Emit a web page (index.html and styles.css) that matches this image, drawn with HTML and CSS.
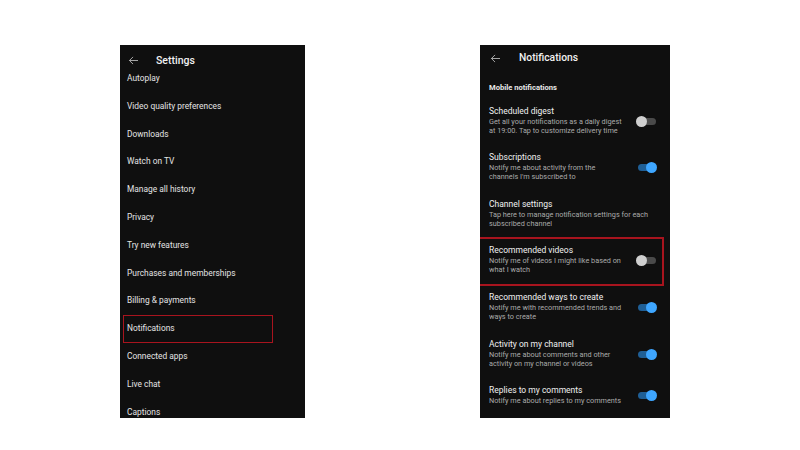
FILE: index.html
```html
<!DOCTYPE html>
<html lang="en">
<head>
<meta charset="utf-8">
<title>Settings and Notifications</title>
<link rel="stylesheet" href="styles.css">
</head>
<body>
<main class="stage">
  <section class="phone settings">
    <header class="bar">
      <svg class="back" viewBox="0 0 12 10" aria-hidden="true"><path d="M11 5H1.5M5.5 1L1.5 5l4 4" fill="none" stroke="currentColor" stroke-width="0.9"/></svg>
      <h1 class="bar-title">Settings</h1>
    </header>
    <ul class="menu">
      <li class="menu-item">Autoplay</li>
      <li class="menu-item">Video quality preferences</li>
      <li class="menu-item">Downloads</li>
      <li class="menu-item">Watch on TV</li>
      <li class="menu-item">Manage all history</li>
      <li class="menu-item">Privacy</li>
      <li class="menu-item">Try new features</li>
      <li class="menu-item">Purchases and memberships</li>
      <li class="menu-item">Billing &amp; payments</li>
      <li class="menu-item highlight">Notifications</li>
      <li class="menu-item">Connected apps</li>
      <li class="menu-item">Live chat</li>
      <li class="menu-item">Captions</li>
    </ul>
  </section>

  <section class="phone notifications">
    <header class="bar bar-n">
      <svg class="back" viewBox="0 0 12 10" aria-hidden="true"><path d="M11 5H1.5M5.5 1L1.5 5l4 4" fill="none" stroke="currentColor" stroke-width="0.9"/></svg>
      <h1 class="bar-title">Notifications</h1>
    </header>
    <h2 class="section-label">Mobile notifications</h2>
    <ul class="opts">
      <li class="opt">
        <div class="opt-text"><div class="opt-title">Scheduled digest</div><div class="opt-desc">Get all your notifications as a daily digest<br>at 19:00. Tap to customize delivery time</div></div>
        <span class="toggle"></span>
      </li>
      <li class="opt">
        <div class="opt-text"><div class="opt-title">Subscriptions</div><div class="opt-desc">Notify me about activity from the<br>channels I'm subscribed to</div></div>
        <span class="toggle on"></span>
      </li>
      <li class="opt">
        <div class="opt-text"><div class="opt-title">Channel settings</div><div class="opt-desc">Tap here to manage notification settings for each<br>subscribed channel</div></div>
      </li>
      <li class="opt highlight">
        <div class="opt-text"><div class="opt-title">Recommended videos</div><div class="opt-desc">Notify me of videos I might like based on<br>what I watch</div></div>
        <span class="toggle"></span>
      </li>
      <li class="opt">
        <div class="opt-text"><div class="opt-title">Recommended ways to create</div><div class="opt-desc">Notify me with recommended trends and<br>ways to create</div></div>
        <span class="toggle on"></span>
      </li>
      <li class="opt">
        <div class="opt-text"><div class="opt-title">Activity on my channel</div><div class="opt-desc">Notify me about comments and other<br>activity on my channel or videos</div></div>
        <span class="toggle on"></span>
      </li>
      <li class="opt">
        <div class="opt-text"><div class="opt-title">Replies to my comments</div><div class="opt-desc">Notify me about replies to my comments</div></div>
        <span class="toggle on"></span>
      </li>
    </ul>
  </section>
</main>
</body>
</html>
```

FILE: styles.css
```css
* { box-sizing: border-box; }
html, body { margin: 0; padding: 0; }
body {
  width: 800px;
  height: 450px;
  background: #ffffff;
  font-family: Roboto, "Liberation Sans", Arial, sans-serif;
  overflow: hidden;
}
.stage {
  display: flex;
  align-items: flex-start;
  padding: 45px 0 0 120px;
  gap: 175px;
}
.phone {
  background: #0f0f0f;
  height: 373px;
  overflow: hidden;
  color: #e6e6e6;
}
.settings { width: 185px; }
.notifications { width: 190px; }

.bar {
  display: flex;
  align-items: center;
  height: 20px;
  padding: 11px 0 0 8px;
}
.back {
  width: 11px;
  height: 9px;
  color: #c8c8c8;
  flex: none;
}
.bar-title {
  margin: 0 0 0 17px;
  font-size: 10.5px;
  line-height: 12px;
  font-weight: 500;
  color: #f1f1f1;
}
.menu {
  list-style: none;
  margin: 0;
  padding: 0;
}
.menu-item {
  height: 27.8px;
  line-height: 27.8px;
  padding-left: 7px;
  font-size: 8.4px;
  color: #e4e4e4;
}
.menu-item.highlight {
  margin: 0 32px 0 3px;
  padding-left: 3px;
  border: 1.5px solid #a8141e;
  line-height: 24.8px;
}

.bar-n {
  height: 26px;
  padding: 0 0 0 10px;
}
.bar-n .bar-title {
  margin-left: 18px;
  font-size: 10.3px;
}
.section-label {
  margin: 0;
  padding: 12px 0 8.5px 9px;
  font-size: 7.6px;
  line-height: 10px;
  font-weight: 700;
  color: #e8e8e8;
}
.opts {
  list-style: none;
  margin: 0;
  padding: 0;
}
.opt {
  position: relative;
  display: flex;
  align-items: flex-start;
  height: 46.67px;
  padding: 4px 13px 0 9px;
}
.opt-text { flex: 1; }
.opt-title {
  font-size: 8.5px;
  line-height: 11px;
  color: #f1f1f1;
}
.opt-desc {
  font-size: 7.3px;
  line-height: 9px;
  color: #aaaaaa;
  white-space: nowrap;
}
.toggle {
  position: relative;
  flex: none;
  width: 21px;
  height: 11px;
  margin-top: 10px;
}
.opt:last-child .toggle { margin-top: 5px; }
.toggle::before {
  content: "";
  position: absolute;
  left: 2px;
  right: 1px;
  top: 2px;
  height: 7px;
  border-radius: 4px;
  background: #4a4a4a;
}
.toggle::after {
  content: "";
  position: absolute;
  left: 0;
  top: 0;
  width: 11px;
  height: 11px;
  border-radius: 50%;
  background: #cfcfcf;
}
.toggle.on::before { background: #1f5f96; }
.toggle.on::after { left: auto; right: 0; background: #3ea6ff; }

.opt.highlight::before {
  content: "";
  position: absolute;
  left: -5px;
  right: 6px;
  top: -4px;
  height: 45px;
  border: 2px solid #a8141e;
  pointer-events: none;
}
```
